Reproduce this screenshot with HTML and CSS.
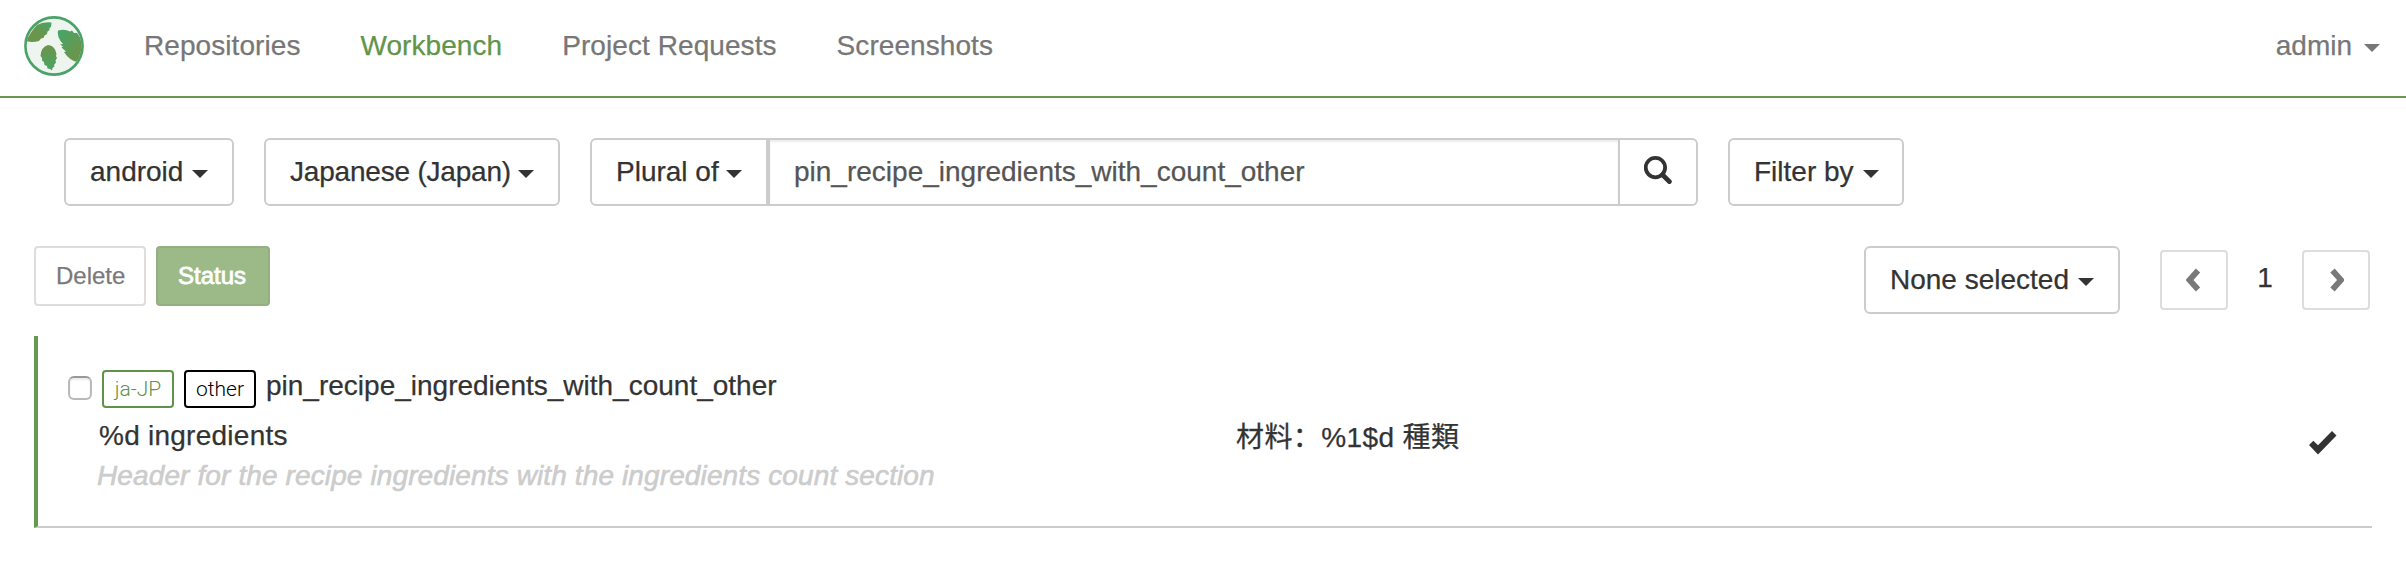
FILE: index.html
```html
<!DOCTYPE html>
<html lang="en">
<head>
<meta charset="utf-8">
<title>Workbench</title>
<link rel="stylesheet" href="styles.css">
</head>
<body>
<header class="navbar">
  <a class="brand">
    <svg class="logo" viewBox="0 0 60 60">
      <defs>
        <linearGradient id="leafA" x1="0" y1="1" x2="1" y2="0"><stop offset=".45" stop-color="#6a954c"/><stop offset="1" stop-color="#48a566"/></linearGradient>
        <linearGradient id="leafB" x1="0" y1="0" x2="1" y2="1"><stop offset=".1" stop-color="#48a566"/><stop offset=".75" stop-color="#6a954c"/></linearGradient>
        <linearGradient id="leafC" x1="0" y1="0" x2="0" y2="1"><stop offset=".1" stop-color="#6a954c"/><stop offset="1" stop-color="#48a566"/></linearGradient>
        <clipPath id="globe"><circle cx="30" cy="30" r="27.5"/></clipPath>
      </defs>
      <circle cx="30" cy="30" r="28.6" fill="#eef4ee" stroke="#4aa268" stroke-width="2.6"/>
      <g clip-path="url(#globe)">
        <path fill="url(#leafA)" d="M2 25Q8 14 13 9Q19 5.500 27.500 6.500L27 11L25.500 12L25.500 14L23.500 15.500L23 18L20.500 19.500L19.500 22L17 22.500L15 25Q8 27 2 25Z"/>
        <path fill="url(#leafB)" d="M34 14.500Q41 12.500 46 15.500L48 14.500L50 17L53 17L58 24L59 36L53 46Q45 44 40 36L42 35.500L37.500 31.500L39 30.500L36 28.500L39 28L36.500 25Q33 20 34 14.500Z"/>
        <path fill="url(#leafC)" d="M24 29Q31 29.500 32.500 38L32 40L33 42L31.500 44.500L32 46.500L30 49L30.500 50.500L28.500 52L28 54.500L26 53L23.500 52.500L23 50L20.500 49L20 46L18 44.500L18 42L16.500 40Q17 31 24 29Z"/>
      </g>
    </svg>
  </a>
  <nav class="nav">
    <a>Repositories</a>
    <a class="active">Workbench</a>
    <a>Project Requests</a>
    <a>Screenshots</a>
  </nav>
  <a class="user">admin<span class="caret"></span></a>
</header>

<section class="filters">
  <button class="btn repo">android<span class="caret"></span></button>
  <button class="btn locale">Japanese (Japan)<span class="caret"></span></button>
  <div class="search">
    <button class="btn attribute">Plural of<span class="caret"></span></button>
    <input class="query" type="text" value="pin_recipe_ingredients_with_count_other">
    <button class="btn go" aria-label="Search">
      <svg class="lens" viewBox="0 0 28 28"><circle cx="11.400" cy="11.600" r="9.700" fill="none" stroke="#333" stroke-width="3.800"/><path d="M18.500 18.700L25.400 25.600" stroke="#333" stroke-width="4.800" stroke-linecap="round"/></svg>
    </button>
  </div>
  <button class="btn filter">Filter by<span class="caret"></span></button>
</section>

<section class="toolbar">
  <button class="btn small delete">Delete</button>
  <button class="btn small status">Status</button>
  <button class="btn selection">None selected<span class="caret"></span></button>
  <button class="btn small page" aria-label="Previous"><svg class="chevron" viewBox="0 0 16 24"><path d="M12 2.500L3.500 12L12 21.500" fill="none" stroke="#333" stroke-width="5.800"/></svg></button>
  <span class="current">1</span>
  <button class="btn small page" aria-label="Next"><svg class="chevron" viewBox="0 0 16 24"><path d="M4.500 2.500L13 12L4.500 21.500" fill="none" stroke="#333" stroke-width="5.800"/></svg></button>
</section>

<main class="unit">
  <div class="unit-head">
    <input class="check" type="checkbox">
    <span class="label lang">ja-JP</span>
    <span class="label plural">other</span>
    <span class="key">pin_recipe_ingredients_with_count_other</span>
  </div>
  <div class="unit-body">
    <div class="source">
      <div class="source-text">%d ingredients</div>
      <em class="comment">Header for the recipe ingredients with the ingredients count section</em>
    </div>
    <div class="target" lang="zh-CN">材料：%1$d 種類</div>
    <svg class="tick" viewBox="0 0 30 24"><path fill="#333" d="M1 14L5.300 9.700L10 14.200L24 0L28.500 4.600L10 23.500Z"/></svg>
  </div>
</main>
</body>
</html>
```
FILE: styles.css
```css
* { box-sizing: border-box; }
body {
  margin: 0;
  background: #fff;
  color: #333;
  font: 28px/40px "Liberation Sans", "Noto Sans CJK SC", sans-serif;
  -webkit-text-stroke: .25px;
}
.navbar {
  display: flex;
  align-items: flex-start;
  height: 98px;
  padding: 0 26px 0 24px;
  border-bottom: 2px solid #69974f;
  color: #777;
}
.logo { display: block; width: 60px; height: 60px; margin-top: 16px; }
.nav { display: flex; gap: 60px; margin: 26px 0 0 60px; white-space: nowrap; letter-spacing: .07px; }
.active { color: #62944a; }
.user { display: flex; margin: 26px 0 0 auto; }
.caret {
  width: 0;
  height: 0;
  margin: 18px 0 0 9px;
  border: 8px solid transparent;
  border-top-color: currentColor;
  border-bottom: 0;
}
.user .caret { margin-left: 12px; }
.btn {
  display: flex;
  flex: none;
  height: 68px;
  margin: 0;
  padding: 12px 24px;
  border: 2px solid #ccc;
  border-radius: 6px;
  background: #fff;
  color: #333;
  font: inherit;
  white-space: nowrap;
}
.filters { display: flex; gap: 30px; padding: 40px 64px 0; }
.repo { width: 170px; }
.locale { width: 296px; letter-spacing: -.2px; }
.locale .caret, .attribute .caret { margin-left: 7px; }
.search { display: flex; width: 1108px; }
.attribute { width: 178px; border-radius: 6px 0 0 6px; }
.query {
  flex: 1;
  min-width: 0;
  height: 68px;
  padding: 12px 24px;
  border: 2px solid #ccc;
  border-radius: 0;
  background: #fff;
  box-shadow: inset 0 2px 2px rgba(0, 0, 0, .075);
  color: #555;
  font: inherit;
}
.go { width: 78px; border-left: 0; border-radius: 0 6px 6px 0; }
.lens { display: block; width: 28px; height: 28px; margin-top: 4px; }
.filter { width: 176px; }
.toolbar { display: flex; align-items: flex-start; height: 90px; padding: 0 36px 0 34px; margin-top: 40px; }
.small {
  height: 60px;
  padding: 10px 20px;
  border-radius: 4px;
  font-size: 24px;
  line-height: 36px;
  opacity: .65;
}
.delete { width: 112px; }
.status {
  width: 114px;
  margin-left: 10px;
  background: #669648;
  border-color: #5b8740;
  color: #fff;
  -webkit-text-stroke: .8px #fff;
}
.selection { width: 256px; margin: 0 40px 0 auto; }
.page { width: 68px; margin-top: 4px; justify-content: center; }
.chevron { width: 16px; height: 24px; margin-top: 6px; }
.current { width: 74px; margin-top: 12px; text-align: center; }
.unit {
  height: 192px;
  margin: 0 34px;
  padding: 34px 34px 0 30px;
  border-left: 4px solid #669851;
  border-bottom: 2px solid #ccc;
}
.unit-head { display: flex; align-items: flex-start; }
.check {
  appearance: none;
  width: 24px;
  height: 24px;
  margin: 6px 10px 0 0;
  border: 2px solid #b9b9b9;
  border-top-color: #999;
  border-radius: 6px;
  box-shadow: inset 0 2px 2px rgba(0, 0, 0, .08);
}
.label {
  width: 72px;
  height: 38px;
  margin-right: 10px;
  border: 2px solid;
  border-radius: 4px;
  font: 300 21px/34px Roboto, "Liberation Sans", sans-serif;
  text-align: center;
  -webkit-text-stroke: 0;
}
.lang { color: #5f9349; }
.plural { color: #000; }
.key { margin: -4px 0 0; }
.unit-body { display: flex; align-items: flex-start; margin-top: 8px; }
.source { flex: none; width: 1168px; padding-left: 31px; }
.source-text { letter-spacing: .25px; }
.comment {
  display: block;
  margin-left: -2px;
  color: #ccc;
  letter-spacing: .12px;
  -webkit-text-stroke: .6px #ccc;
}
.target { margin-top: 2px; letter-spacing: .4px; }
.tick { width: 30px; height: 24px; margin: 15px 0 0 auto; }
```
